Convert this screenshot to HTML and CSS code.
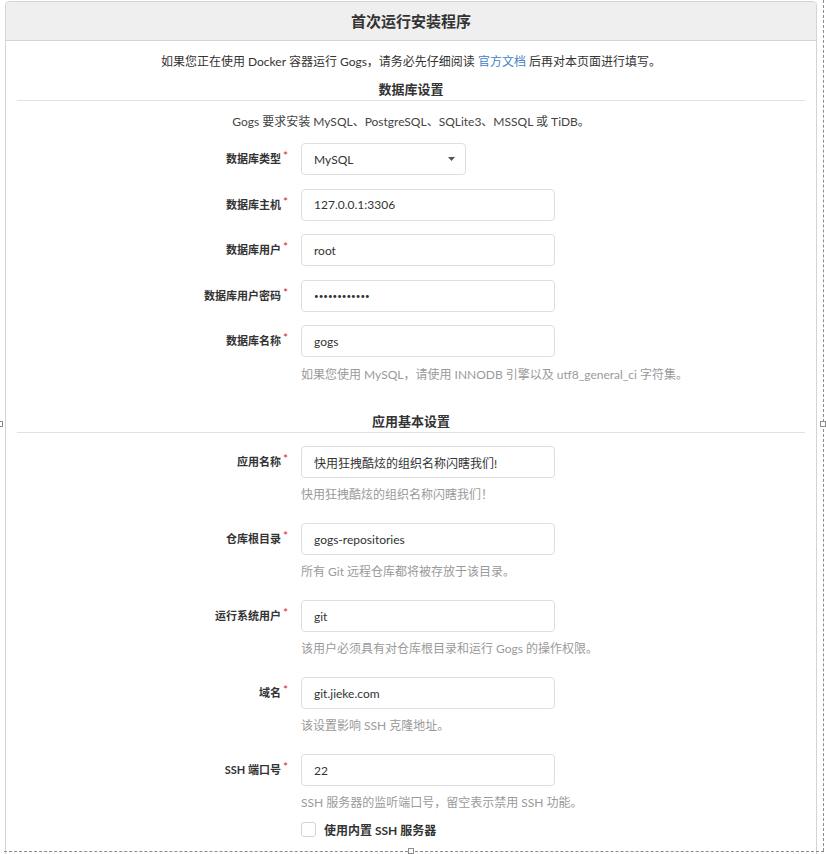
FILE: index.html
```html
<!DOCTYPE html>
<html lang="zh-CN">
<head>
<meta charset="utf-8">
<title>首次运行安装程序</title>
<link rel="stylesheet" href="styles.css">
</head>
<body>
<div class="stage">
  <div class="card">
    <h3 class="card-header">首次运行安装程序</h3>
    <div class="card-body">
      <p class="intro">如果您正在使用 Docker 容器运行 Gogs，请务必先仔细阅读 <a class="link" href="#">官方文档</a> 后再对本页面进行填写。</p>

      <h4 class="section-title first">数据库设置</h4>
      <p class="section-note">Gogs 要求安装 MySQL、PostgreSQL、SQLite3、MSSQL 或 TiDB。</p>

      <div class="fields db">
        <div class="field">
          <label class="req">数据库类型</label>
          <div class="dropdown"><span>MySQL</span><svg class="caret" width="7" height="4" viewBox="0 0 7 4"><path d="M0 0h7L3.5 4z" fill="#555"/></svg></div>
        </div>
        <div class="field">
          <label class="req">数据库主机</label>
          <input class="input" type="text" value="127.0.0.1:3306">
        </div>
        <div class="field">
          <label class="req">数据库用户</label>
          <input class="input" type="text" value="root">
        </div>
        <div class="field">
          <label class="req">数据库用户密码</label>
          <input class="input pw" type="password" value="xxxxxxxxxxxx">
        </div>
        <div class="field">
          <label class="req">数据库名称</label>
          <input class="input" type="text" value="gogs">
          <span class="help db-help">如果您使用 MySQL，请使用 INNODB 引擎以及 utf8_general_ci 字符集。</span>
        </div>
      </div>

      <h4 class="section-title second">应用基本设置</h4>

      <div class="fields app">
        <div class="field">
          <label class="req">应用名称</label>
          <input class="input" type="text" value="快用狂拽酷炫的组织名称闪瞎我们!">
          <span class="help">快用狂拽酷炫的组织名称闪瞎我们！</span>
        </div>
        <div class="field">
          <label class="req">仓库根目录</label>
          <input class="input" type="text" value="gogs-repositories">
          <span class="help">所有 Git 远程仓库都将被存放于该目录。</span>
        </div>
        <div class="field">
          <label class="req">运行系统用户</label>
          <input class="input" type="text" value="git">
          <span class="help">该用户必须具有对仓库根目录和运行 Gogs 的操作权限。</span>
        </div>
        <div class="field">
          <label class="req">域名</label>
          <input class="input" type="text" value="git.jieke.com">
          <span class="help">该设置影响 SSH 克隆地址。</span>
        </div>
        <div class="field">
          <label class="req">SSH 端口号</label>
          <input class="input" type="text" value="22">
          <span class="help">SSH 服务器的监听端口号，留空表示禁用 SSH 功能。</span>
        </div>
        <div class="check-row">
          <span class="checkbox"></span>
          <span class="check-label">使用内置 SSH 服务器</span>
        </div>
      </div>
    </div>
  </div>

  <div class="sel-right"></div>
  <div class="sel-bottom"></div>
  <div class="handle h-left"></div>
  <div class="handle h-right"></div>
  <div class="handle h-bottom"></div>
</div>
</body>
</html>
```

FILE: styles.css
```css
html, body {
  margin: 0;
  padding: 0;
  background: #ffffff;
  overflow: hidden;
}

body {
  font-family: "Lato", "Noto Sans CJK SC", sans-serif;
  color: #333333;
}

.stage {
  position: relative;
  width: 826px;
  height: 854px;
  overflow: hidden;
}

.card {
  margin: 1px 0 0 5px;
  width: 810px;
  border: 1px solid #d4d4d5;
  border-radius: 4px 4px 0 0;
  background: #ffffff;
  padding-bottom: 40px;
}

.card-header {
  margin: 0;
  height: 38px;
  line-height: 38px;
  background: #efefef;
  border-bottom: 1px solid #d4d4d5;
  border-radius: 4px 4px 0 0;
  text-align: center;
  font-size: 15px;
  font-weight: 700;
  color: #333333;
}

.card-body {
  padding: 12px 11px 0 11px;
}

.intro {
  margin: 0;
  text-align: center;
  font-size: 12px;
  line-height: 18px;
  color: #333333;
}

.link {
  color: #4183c4;
  text-decoration: none;
}

.section-title {
  margin: 0;
  text-align: center;
  font-size: 13px;
  font-weight: 700;
  line-height: 18px;
  padding-bottom: 2px;
  border-bottom: 1px solid #e2e2e2;
  color: #333333;
}

.section-title.first {
  margin-top: 9px;
}

.section-title.second {
  margin-top: 29px;
}

.section-note {
  margin: 12px 0 0 0;
  text-align: center;
  font-size: 12px;
  line-height: 18px;
  color: #444444;
}

.fields {
  display: flex;
  flex-direction: column;
}

.fields.db {
  margin-top: 12px;
  gap: 13.5px;
}

.fields.app {
  margin-top: 13px;
  gap: 20px;
}

.field {
  display: grid;
  grid-template-columns: 271px 1fr;
  column-gap: 13px;
  align-items: center;
}

.field label {
  text-align: right;
  font-size: 11px;
  font-weight: 700;
  color: #333333;
  line-height: 16px;
}

.field label.req::after {
  content: "*";
  color: #db2828;
  font-weight: 400;
  font-size: 12px;
  margin-left: 2px;
  position: relative;
  top: -3px;
}

.input,
.dropdown {
  box-sizing: border-box;
  height: 32px;
  border: 1px solid #dedede;
  border-radius: 4px;
  background: #ffffff;
  font-family: "Lato", "Noto Sans CJK SC", sans-serif;
  font-size: 12px;
  color: #333333;
  padding: 0 12px;
  outline: none;
}

.input {
  width: 254px;
}

.input.pw {
  font-size: 8px;
}

.dropdown {
  width: 165px;
  display: flex;
  align-items: center;
  justify-content: space-between;
  padding-right: 10px;
}

.caret {
  display: block;
}

.help {
  grid-column: 2;
  margin-top: 8px;
  font-size: 12px;
  line-height: 17px;
  color: #9a9a9a;
}

.help.db-help {
  margin-top: 9px;
}

.check-row {
  margin-top: -11px;
  margin-left: 284px;
  display: flex;
  align-items: center;
  gap: 8px;
  height: 18px;
}

.checkbox {
  box-sizing: border-box;
  width: 15px;
  height: 15px;
  border: 1px solid #d4d4d5;
  border-radius: 3px;
  background: #ffffff;
}

.check-label {
  font-size: 12px;
  font-weight: 700;
  color: #333333;
}

.sel-right {
  position: absolute;
  left: 823px;
  top: 0;
  height: 851px;
  border-left: 1px dashed #8c8c8c;
}

.sel-bottom {
  position: absolute;
  left: 4px;
  top: 851px;
  width: 820px;
  border-top: 1px dashed #8c8c8c;
}

.handle {
  position: absolute;
  box-sizing: border-box;
  width: 6px;
  height: 6px;
  border: 1px solid #8c8c8c;
  background: #ffffff;
}

.h-left {
  left: -3px;
  top: 421px;
}

.h-right {
  left: 820px;
  top: 421px;
}

.h-bottom {
  left: 408px;
  top: 848px;
}
```
